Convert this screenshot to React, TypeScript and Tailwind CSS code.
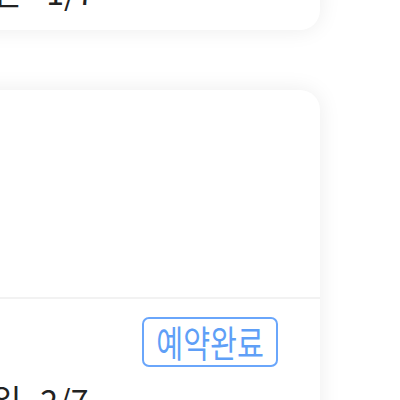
import React from 'react';

type Booking = {
  label: string;
  date: string;
  gap: string;
};

const bookings: Booking[] = [
  { label: '체크인', date: '1/7', gap: 'gap-[25px]' },
  { label: '이용일', date: '2/7', gap: 'gap-[19px]' },
];

function BookingCard({ booking }: { booking: Booking }) {
  return (
    <div className="w-[424px] bg-white rounded-[20px] shadow-[0_0_22px_rgba(0,0,0,0.08)] overflow-hidden">
      {/* 상단 영역 */}
      <div className="h-[207px]" />
      <div className="h-[2px] bg-[#f2f2f2]" />

      {/* 하단 정보 */}
      <div className="px-[42px] pt-[18px] pb-[19px]">
        <div className="flex justify-end">
          <span className="w-[136px] h-[50px] flex items-center justify-center border-2 border-[#6aa6fb] rounded-[7px] text-[#5f9ff7]">
            <span className="inline-block shrink-0 text-[37px] leading-none scale-x-[0.79] whitespace-nowrap">
              예약완료
            </span>
          </span>
        </div>
        <div className={`mt-[12px] -ml-[5px] flex ${booking.gap} text-[32px] leading-[40px] text-[#222222]`}>
          <span>{booking.label}</span>
          <span>{booking.date}</span>
        </div>
      </div>
    </div>
  );
}

export default function App() {
  return (
    <div
      className="w-[400px] h-[400px] overflow-hidden bg-white"
      style={{ fontFamily: '"Noto Sans CJK KR", "Noto Sans", sans-serif' }}
    >
      <div className="-mt-[318px] -ml-[104px] flex flex-col gap-[60px]">
        {bookings.map((b) => (
          <BookingCard key={b.date} booking={b} />
        ))}
      </div>
    </div>
  );
}
